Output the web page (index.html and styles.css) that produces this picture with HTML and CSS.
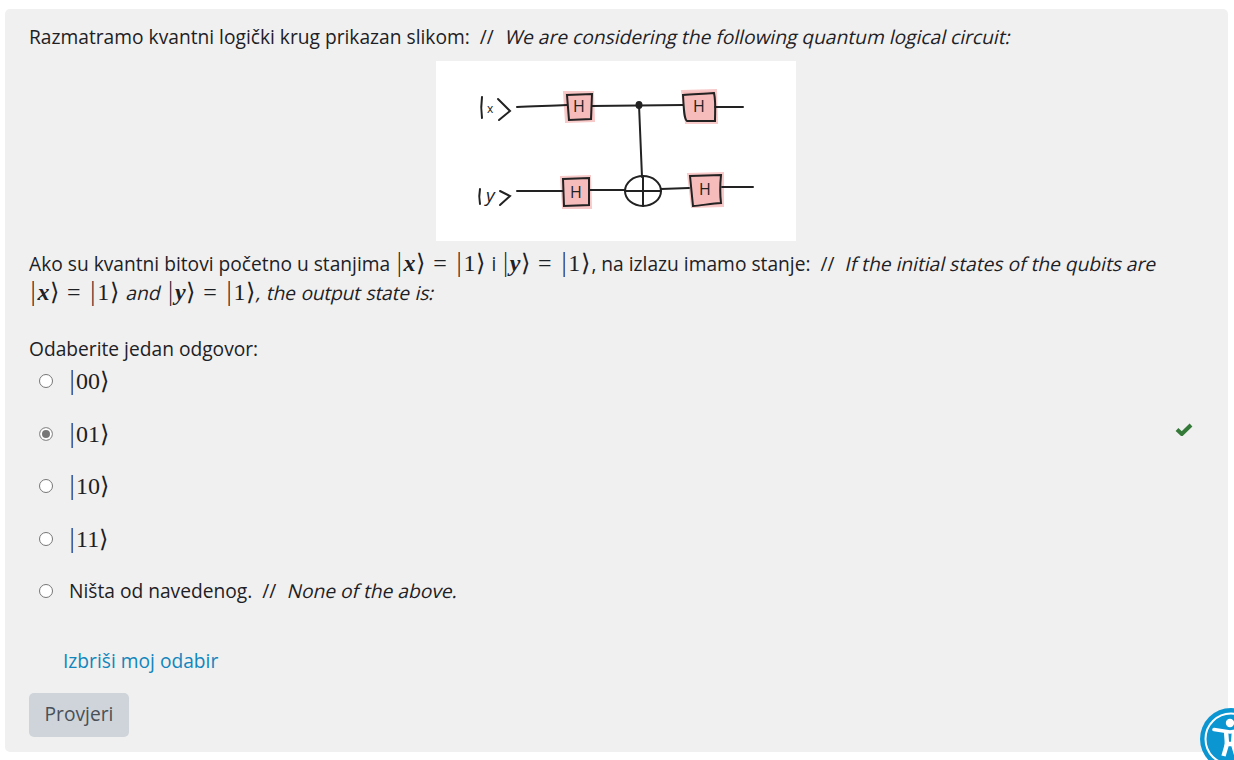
FILE: index.html
```html
<!DOCTYPE html>
<html lang="hr">
<head>
  <meta charset="UTF-8">
  <title>Kvantni logički krug</title>
  <link rel="stylesheet" href="styles.css">
</head>
<body>
  <div class="question">
    <p class="line">Razmatramo kvantni logički krug prikazan slikom:&nbsp; //&nbsp; <em>We are considering the following quantum logical circuit:</em></p>
    <div class="figure">
      <svg class="circuit" width="360" height="180" viewBox="0 0 360 180">
        <g class="pink">
          <path d="M128 31L157 31L158 60L130 61Z"/>
          <path d="M246 30L280 29L281 62L250 62Z"/>
          <path d="M125 116L154 115L155 147L127 147Z"/>
          <path d="M252 113L287 112L287 145L256 146Z"/>
        </g>
        <g class="ink">
          <path d="M46 36C45 43 45 50 46 57"/>
          <path d="M62 38L74 50L63 59"/>
          <path d="M44 128C43 133 43 138 44 143"/>
          <path d="M64 130L74 135L64 144"/>
          <path d="M81 46C100 45 115 45 131 44"/>
          <path d="M156 45L247 44"/>
          <path d="M279 46L307 46"/>
          <path d="M81 130L127 130"/>
          <path d="M153 129L189 129"/>
          <path d="M225 128L253 127"/>
          <path d="M286 126L317 126"/>
          <path d="M203 44L206 116"/>
          <path d="M131 34L156 33L155 58L133 59Z"/>
          <path d="M247 34C258 33 268 33 278 32C280 41 279 50 279 60C270 60 260 60 251 60C248 58 248 50 247 34Z"/>
          <path d="M127 118L153 117L153 144L128 145Z"/>
          <path d="M254 115L285 114C284 124 284 134 285 142C275 142 265 145 257 145Z"/>
          <ellipse cx="207" cy="130" rx="18" ry="15"/>
          <path d="M207 115L207 145M189 130L225 130"/>
          <ellipse class="dot" cx="203" cy="44" rx="2.5" ry="3"/>
        </g>
        <g class="hand">
          <text x="51" y="52" class="small">x</text>
          <text x="50" y="141" class="tall">y</text>
          <text x="143" y="51" text-anchor="middle">H</text>
          <text x="263" y="51" text-anchor="middle">H</text>
          <text x="140" y="137" text-anchor="middle">H</text>
          <text x="269" y="134" text-anchor="middle">H</text>
        </g>
      </svg>
    </div>
    <p class="line">Ako su kvantni bitovi početno u stanjima <span class="math inline"><span class="delim">|</span><i>x</i><span class="delim">⟩</span><span class="eq">=</span><span class="delim">|</span>1<span class="delim">⟩</span></span> i <span class="math inline"><span class="delim">|</span><i>y</i><span class="delim">⟩</span><span class="eq">=</span><span class="delim">|</span>1<span class="delim">⟩</span></span>, na izlazu imamo stanje:&nbsp; //&nbsp; <em>If the initial states of the qubits are</em> <span class="math inline"><span class="delim">|</span><i>x</i><span class="delim">⟩</span><span class="eq">=</span><span class="delim">|</span>1<span class="delim">⟩</span></span> <em>and</em> <span class="math inline"><span class="delim">|</span><i>y</i><span class="delim">⟩</span><span class="eq">=</span><span class="delim">|</span>1<span class="delim">⟩</span></span><em class="tail">, the output state is:</em></p>

    <p class="prompt">Odaberite jedan odgovor:</p>
    <div class="answers">
      <div class="answer"><span class="radio"></span><span class="math"><span class="delim">|</span>00<span class="delim">⟩</span></span></div>
      <div class="answer">
        <span class="radio checked"></span><span class="math"><span class="delim">|</span>01<span class="delim">⟩</span></span>
        <svg class="tick" width="18" height="14" viewBox="0 0 18 14"><path d="M2 7.5L6.8 12L16 3"/></svg>
      </div>
      <div class="answer"><span class="radio"></span><span class="math"><span class="delim">|</span>10<span class="delim">⟩</span></span></div>
      <div class="answer"><span class="radio"></span><span class="math"><span class="delim">|</span>11<span class="delim">⟩</span></span></div>
      <div class="answer"><span class="radio"></span><span>Ništa od navedenog.&nbsp; //&nbsp; <em>None of the above.</em></span></div>
    </div>

    <a class="clear" href="#">Izbriši moj odabir</a>
    <button class="check-btn">Provjeri</button>
  </div>

  <div class="a11y">
    <svg width="62" height="62" viewBox="0 0 62 62">
      <circle cx="31" cy="31" r="31" fill="#0b96d2"/>
      <circle cx="31" cy="31" r="25.5" fill="none" stroke="#fff" stroke-width="2"/>
      <circle cx="30" cy="15" r="4.2" fill="#fff"/>
      <path d="M14 21.5L30 24L46 21.5" fill="none" stroke="#fff" stroke-width="3.6" stroke-linecap="round"/>
      <path d="M26 23L27 36L23.5 48M34 23L33 36L36.5 48M27 36L33 36" fill="#fff" stroke="#fff" stroke-width="4.4"/>
    </svg>
  </div>
</body>
</html>
```

FILE: styles.css
```css
html, body {
  height: 100%;
}
body {
  margin: 0;
  background: #fff;
  color: #1d2125;
  font-family: "Open Sans", sans-serif;
  font-size: 19.2px;
  line-height: 28.5px;
  overflow: hidden;
}
/* the reference slants the upright face, it has no true italic */
em {
  display: inline-block;
  margin-left: 2px;
  font-style: normal;
  transform: skewX(-13deg);
}
em.tail {
  margin-left: 0;
  word-spacing: 1px;
  letter-spacing: -0.2px;
}
.question {
  box-sizing: border-box;
  height: 743px;
  margin: 9px 6px 0 5px;
  padding: 13px 25px 0 24px;
  background: #f0f0f0;
  border-radius: 5px;
}
.line {
  margin: 0;
  line-height: 29px;
}
.figure {
  display: flex;
  justify-content: center;
  margin: 9.5px 0 8.5px;
}
.circuit {
  display: block;
  background: #fff;
}
.pink path {
  fill: #f6bcbc;
  stroke: #f7c9c9;
  stroke-width: 2;
  filter: blur(0.6px);
}
.ink {
  fill: none;
  stroke: #222;
  stroke-width: 2;
  stroke-linecap: round;
  filter: blur(0.35px);
}
.ink .dot {
  fill: #222;
}
.hand {
  font-family: "Open Sans", sans-serif;
  font-size: 16px;
  font-weight: 500;
  fill: #222;
}
.hand .small {
  font-size: 12px;
  font-weight: 400;
}
.hand .tall {
  font-size: 19px;
  font-style: italic;
  font-weight: 400;
}
.math {
  display: inline-block;
  height: 28.5px;
  line-height: 28.5px;
  font-family: "Liberation Serif", "DejaVu Serif", serif;
  font-size: 24px;
  vertical-align: top;
  white-space: nowrap;
  margin-left: -1px;
}
.math.inline {
  margin-left: 0;
  margin-right: 1.5px;
  letter-spacing: 0.3px;
}
.math i {
  font-weight: 700;
}
.delim {
  font-family: "DejaVu Sans", sans-serif;
  font-size: 24px;
  font-weight: 200;
}
.eq {
  margin: 0 8px;
}
.prompt {
  margin: 28px 0 0;
}
.answers {
  display: flex;
  flex-direction: column;
  gap: 24px;
  margin: 3.5px 0 0 10px;
}
.answer {
  display: flex;
  align-items: center;
  gap: 16px;
  height: 28.5px;
}
.radio {
  box-sizing: border-box;
  flex: none;
  width: 14px;
  height: 14px;
  background: #fff;
  border: 1px solid #767676;
  border-radius: 50%;
}
.radio.checked {
  background: #777;
  border-color: #9a9a9a;
  box-shadow: inset 0 0 0 2px #fff;
}
.tick {
  margin-left: auto;
  margin-right: 10px;
  margin-top: -9px;
}
.tick path {
  fill: none;
  stroke: #357a38;
  stroke-width: 4;
}
.clear {
  display: block;
  margin: 41.5px 0 0 34px;
  color: #1186bd;
  text-decoration: none;
}
.check-btn {
  display: block;
  box-sizing: border-box;
  width: 100px;
  height: 44px;
  margin-top: 17px;
  padding: 0;
  background: #ced4da;
  border: 0;
  border-radius: 5px;
  color: #495057;
  font: inherit;
}
.a11y {
  position: fixed;
  left: 1200px;
  top: 708px;
}
.a11y svg {
  display: block;
}
```
